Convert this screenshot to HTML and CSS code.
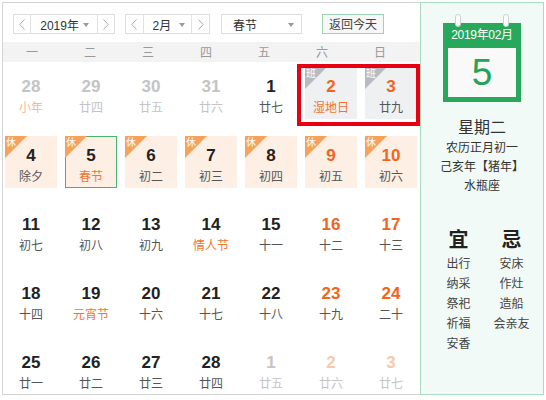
FILE: index.html
```html
<!DOCTYPE html>
<html lang="zh-CN">
<head>
<meta charset="utf-8">
<title>万年历</title>
<link rel="stylesheet" href="styles.css">
</head>
<body>
<div class="cal">
  <div class="main">
    <div class="toolbar">
      <div class="spin year">
        <span class="nav"><svg width="6" height="11" viewBox="0 0 6 11"><path d="M5.5 0.5 L0.8 5.5 L5.5 10.5" fill="none" stroke="#aaa" stroke-width="1"/></svg></span>
        <span class="sel">2019年<i class="caret"></i></span>
        <span class="nav"><svg width="6" height="11" viewBox="0 0 6 11"><path d="M0.5 0.5 L5.2 5.5 L0.5 10.5" fill="none" stroke="#aaa" stroke-width="1"/></svg></span>
      </div>
      <div class="spin month">
        <span class="nav"><svg width="6" height="11" viewBox="0 0 6 11"><path d="M5.5 0.5 L0.8 5.5 L5.5 10.5" fill="none" stroke="#aaa" stroke-width="1"/></svg></span>
        <span class="sel">2月<i class="caret"></i></span>
        <span class="nav"><svg width="6" height="11" viewBox="0 0 6 11"><path d="M0.5 0.5 L5.2 5.5 L0.5 10.5" fill="none" stroke="#aaa" stroke-width="1"/></svg></span>
      </div>
      <div class="select">春节<i class="caret"></i></div>
      <button class="today">返回今天</button>
    </div>
    <div class="weekhead">
      <span>一</span><span>二</span><span>三</span><span>四</span><span>五</span><span>六</span><span>日</span>
    </div>
    <div class="grid">
      <div class="cell other"><b>28</b><em class="fest-lt">小年</em></div>
      <div class="cell other"><b>29</b><em>廿四</em></div>
      <div class="cell other"><b>30</b><em>廿五</em></div>
      <div class="cell other"><b>31</b><em>廿六</em></div>
      <div class="cell"><b>1</b><em>廿七</em></div>
      <div class="cell work"><i class="tag">班</i><b class="wk">2</b><em class="fest">湿地日</em></div>
      <div class="cell work"><i class="tag">班</i><b class="wk">3</b><em>廿九</em></div>

      <div class="cell rest"><i class="tag">休</i><b>4</b><em>除夕</em></div>
      <div class="cell rest today-cell"><i class="tag">休</i><b>5</b><em class="fest">春节</em></div>
      <div class="cell rest"><i class="tag">休</i><b>6</b><em>初二</em></div>
      <div class="cell rest"><i class="tag">休</i><b>7</b><em>初三</em></div>
      <div class="cell rest"><i class="tag">休</i><b>8</b><em>初四</em></div>
      <div class="cell rest"><i class="tag">休</i><b class="wk">9</b><em>初五</em></div>
      <div class="cell rest"><i class="tag">休</i><b class="wk">10</b><em>初六</em></div>

      <div class="cell"><b>11</b><em>初七</em></div>
      <div class="cell"><b>12</b><em>初八</em></div>
      <div class="cell"><b>13</b><em>初九</em></div>
      <div class="cell"><b>14</b><em class="fest">情人节</em></div>
      <div class="cell"><b>15</b><em>十一</em></div>
      <div class="cell"><b class="wk">16</b><em>十二</em></div>
      <div class="cell"><b class="wk">17</b><em>十三</em></div>

      <div class="cell"><b>18</b><em>十四</em></div>
      <div class="cell"><b>19</b><em class="fest">元宵节</em></div>
      <div class="cell"><b>20</b><em>十六</em></div>
      <div class="cell"><b>21</b><em>十七</em></div>
      <div class="cell"><b>22</b><em>十八</em></div>
      <div class="cell"><b class="wk">23</b><em>十九</em></div>
      <div class="cell"><b class="wk">24</b><em>二十</em></div>

      <div class="cell"><b>25</b><em>廿一</em></div>
      <div class="cell"><b>26</b><em>廿二</em></div>
      <div class="cell"><b>27</b><em>廿三</em></div>
      <div class="cell"><b>28</b><em>廿四</em></div>
      <div class="cell other"><b>1</b><em>廿五</em></div>
      <div class="cell other"><b class="wk-lt">2</b><em>廿六</em></div>
      <div class="cell other"><b class="wk-lt">3</b><em>廿七</em></div>
    </div>
  </div>
  <div class="side">
    <div class="daybox">
      <span class="ring r1"></span><span class="ring r2"></span>
      <div class="daybox-head">2019年02月</div>
      <div class="daybox-page">5</div>
    </div>
    <div class="info">
      <div class="wday">星期二</div>
      <div>农历正月初一</div>
      <div>己亥年【猪年】</div>
      <div>水瓶座</div>
    </div>
    <div class="yiji">
      <div class="col">
        <div class="yj-title">宜</div>
        <div>出行</div><div>纳采</div><div>祭祀</div><div>祈福</div><div>安香</div>
      </div>
      <div class="col">
        <div class="yj-title">忌</div>
        <div>安床</div><div>作灶</div><div>造船</div><div>会亲友</div>
      </div>
    </div>
  </div>
  <div class="redbox"></div>
</div>
</body>
</html>
```
FILE: styles.css
```css
* { box-sizing: border-box; }
body {
  margin: 0;
  background: #fff;
  font-family: "Liberation Sans", Arial, "Noto Sans CJK SC", sans-serif;
  color: #333;
}
.cal {
  position: relative;
  display: flex;
  margin: 2px 0 0 2px;
  width: 542px;
  height: 393px;
}
.main {
  width: 418px;
  border: 1px solid #d4d4d4;
  border-right: none;
  padding-top: 11px;
}
.toolbar {
  display: flex;
  align-items: center;
  height: 20px;
  padding-left: 10px;
  font-size: 12px;
}
.spin {
  display: flex;
  height: 20px;
  border: 1px solid #dcdcdc;
  background: #fff;
}
.spin .nav {
  display: flex;
  align-items: center;
  justify-content: center;
  width: 17px;
}
.spin .sel {
  display: flex;
  align-items: center;
  padding-left: 9px;
  border-left: 1px solid #e2e2e2;
  border-right: 1px solid #e2e2e2;
  position: relative;
}
.year { width: 102px; }
.year .sel { width: 70px; }
.month { width: 85px; margin-left: 10px; }
.month .sel { width: 51px; }
.caret {
  position: absolute;
  right: 8px;
  top: 8px;
  width: 0;
  height: 0;
  border-left: 3px solid transparent;
  border-right: 3px solid transparent;
  border-top: 4px solid #999;
}
.month .caret { right: 6px; }
.select {
  position: relative;
  display: flex;
  align-items: center;
  width: 81px;
  height: 20px;
  margin-left: 11px;
  padding-left: 11px;
  border: 1px solid #dcdcdc;
  background: #fff;
}
.select .caret { right: 7px; }
.today {
  margin-left: 20px;
  width: 62px;
  height: 20px;
  padding: 0;
  border: 1px solid #9ed2b2;
  background: #f7f7f7;
  color: #444;
  font-family: "Noto Sans CJK SC", sans-serif;
  font-size: 12px;
  line-height: 18px;
}
.weekhead {
  display: grid;
  grid-template-columns: repeat(7, 58px);
  height: 20px;
  margin-top: 8px;
  background: #f3f3f3;
  color: #999;
  font-family: "Noto Sans CJK SC", sans-serif;
  font-size: 12px;
  line-height: 20px;
  text-align: center;
}
.grid {
  display: grid;
  grid-template-columns: repeat(7, 52px);
  grid-auto-rows: 52px;
  column-gap: 8px;
  row-gap: 17px;
  margin-top: 5px;
  padding-left: 2px;
}
.cell {
  position: relative;
  padding-top: 10px;
  text-align: center;
}
.cell b {
  display: block;
  font-size: 17px;
  font-weight: bold;
  line-height: 20px;
  color: #222;
}
.cell em {
  display: block;
  font-style: normal;
  font-family: "Noto Sans CJK SC", sans-serif;
  font-size: 12px;
  line-height: 20px;
  color: #555;
}
.cell b.wk { color: #f2641e; }
.cell em.fest { color: #f2732f; }
.other b, .other em { color: #c4c4c4; }
.other em.fest-lt { color: #f7b896; }
.other b.wk-lt { color: #f6c9ae; }
.rest { background: #fdefe4; }
.work { background: #eff0f2; }
.today-cell { border: 1px solid #45b56e; padding-top: 9px; }
.tag {
  position: absolute;
  left: 0;
  top: 0;
  width: 22px;
  height: 22px;
  clip-path: polygon(0 0, 100% 0, 0 100%);
  background: #f6a15c;
  color: #fff;
  font-style: normal;
  font-family: "Noto Sans CJK SC", sans-serif;
  font-size: 10px;
  line-height: 12px;
  text-align: left;
  padding-left: 1px;
}
.today-cell .tag { left: -1px; top: -1px; }
.work .tag { background: #b6bac2; }
.side {
  flex: 1;
  border: 1px solid #a9dcc0;
  background: #f1faf6;
  padding-top: 20px;
  text-align: center;
  font-family: "Noto Sans CJK SC", sans-serif;
}
.daybox {
  position: relative;
  width: 78px;
  height: 79px;
  margin: 0 auto;
  padding: 0 5px 5px;
  background: #27a85a;
  display: flex;
  flex-direction: column;
}
.ring {
  position: absolute;
  top: -9px;
  width: 6px;
  height: 13px;
  border-radius: 3px;
  background: #fff;
  border: 1px solid #c8d4cc;
}
.r1 { left: 12px; }
.r2 { right: 12px; }
.daybox-head {
  height: 25px;
  color: #fff;
  font-family: "Liberation Sans", "Noto Sans CJK SC", sans-serif;
  font-size: 12px;
  line-height: 25px;
  letter-spacing: -0.3px;
  white-space: nowrap;
}
.daybox-page {
  flex: 1;
  background: #f9f9f9;
  color: #22a455;
  font-family: "Liberation Sans", Arial, sans-serif;
  font-size: 37px;
  line-height: 49px;
}
.info {
  margin-top: 14px;
  font-size: 12px;
  line-height: 19px;
  color: #333;
}
.info .wday {
  font-size: 16px;
  line-height: 21px;
}
.yiji {
  display: flex;
  justify-content: center;
  gap: 3px;
  margin-top: 32px;
  padding-left: 6px;
  font-size: 12px;
  line-height: 20px;
  color: #444;
}
.yiji .col { width: 50px; }
.yj-title {
  font-size: 20px;
  font-weight: bold;
  line-height: 26px;
  color: #222;
  margin-bottom: 1px;
}
.redbox {
  position: absolute;
  left: 295px;
  top: 62px;
  width: 123px;
  height: 62px;
  border: 4px solid #e60012;
}
```
